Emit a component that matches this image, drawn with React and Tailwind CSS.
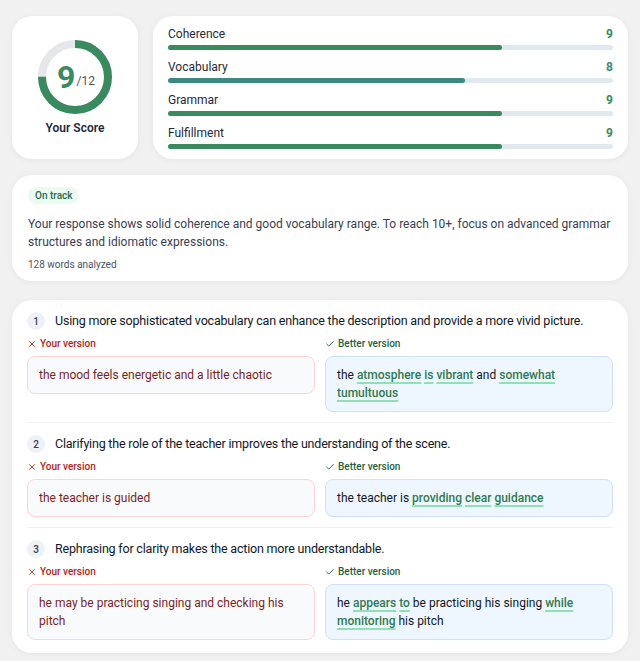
import { X, Check } from "lucide-react";

const SCORES = [
  { label: "Coherence", value: 9, color: "bg-[#3a8a5f]", text: "text-[#3a8a5f]" },
  { label: "Vocabulary", value: 8, color: "bg-[#3b8a7d]", text: "text-[#3b8a7d]" },
  { label: "Grammar", value: 9, color: "bg-[#3a8a5f]", text: "text-[#3a8a5f]" },
  { label: "Fulfillment", value: 9, color: "bg-[#3a8a5f]", text: "text-[#3a8a5f]" },
];

// better-version text is split into plain and highlighted chunks
const SUGGESTIONS = [
  {
    note: "Using more sophisticated vocabulary can enhance the description and provide a more vivid picture.",
    yours: "the mood feels energetic and a little chaotic",
    better: [
      ["the "],
      ["atmosphere", true],
      [" "],
      ["is", true],
      [" "],
      ["vibrant", true],
      [" and "],
      ["somewhat", true],
      [" "],
      ["tumultuous", true],
    ],
  },
  {
    note: "Clarifying the role of the teacher improves the understanding of the scene.",
    yours: "the teacher is guided",
    better: [
      ["the teacher is "],
      ["providing", true],
      [" "],
      ["clear", true],
      [" "],
      ["guidance", true],
    ],
  },
  {
    note: "Rephrasing for clarity makes the action more understandable.",
    yours: "he may be practicing singing and checking his pitch",
    better: [
      ["he "],
      ["appears", true],
      [" "],
      ["to", true],
      [" be practicing his singing "],
      ["while", true],
      [" "],
      ["monitoring", true],
      [" his pitch"],
    ],
  },
];

function ScoreRing({ score, max }) {
  const r = 33;
  const c = 2 * Math.PI * r;
  const filled = (score / max) * c;
  return (
    <div className="relative h-[74px] w-[74px]">
      <svg width="74" height="74" viewBox="0 0 74 74" className="-rotate-90">
        <circle cx="37" cy="37" r={r} fill="none" stroke="#e5e7eb" strokeWidth="8" />
        <circle
          cx="37"
          cy="37"
          r={r}
          fill="none"
          stroke="#3a8a5f"
          strokeWidth="8"
          strokeDasharray={`${filled} ${c}`}
        />
      </svg>
      <div className="absolute inset-0 flex items-center justify-center pl-[2px]">
        <span className="text-[32px] font-bold leading-none text-[#3a8a5f]">{score}</span>
        <span className="mt-[8px] ml-[1px] text-[12px] text-[#4b5563]">/{max}</span>
      </div>
    </div>
  );
}

function Suggestion({ item, index, last }) {
  return (
    <div className={`pt-3 ${last ? "pb-[13px]" : "pb-[10px] border-b border-[#eef0f3]"}`}>
      <div className="flex items-center gap-[10px]">
        <span className="flex h-[18px] w-[18px] shrink-0 items-center justify-center rounded-full bg-[#eef1f6] text-[10px] font-medium text-[#374151]">
          {index + 1}
        </span>
        <p className="text-[12.5px] leading-[18px] tracking-[-0.2px] text-[#111827]">{item.note}</p>
      </div>
      <div className="mt-[7px] grid grid-cols-2 gap-[10px]">
        <div>
          <div className="flex items-center gap-[3px] text-[10px] font-medium leading-[14px] text-[#b42318]">
            <X size={10} strokeWidth={2} />
            Your version
          </div>
          <div className="mt-[5px] rounded-lg border border-[#fbd5d5] bg-[#f8fafc] px-[11px] py-[9px] text-[12px] leading-[18px] text-[#7a1f1f]">
            {item.yours}
          </div>
        </div>
        <div>
          <div className="flex items-center gap-[3px] text-[10px] font-medium leading-[14px] text-[#1f5f3c]">
            <Check size={10} strokeWidth={2.2} />
            Better version
          </div>
          <div className="mt-[5px] rounded-lg border border-[#cfe2fb] bg-[#eef6ff] px-[11px] py-[9px] text-[12px] leading-[18px] text-[#111827]">
            {item.better.map(([t, hl], i) =>
              hl ? (
                <span
                  key={i}
                  className="font-medium text-[#2f7a4f] underline decoration-[#8fe0b4] decoration-2 underline-offset-[3px]"
                >
                  {t}
                </span>
              ) : (
                <span key={i}>{t}</span>
              )
            )}
          </div>
        </div>
      </div>
    </div>
  );
}

export default function App() {
  return (
    <div
      className="min-h-screen bg-[#f1f1f1] px-3 pt-4 pb-2"
      style={{ fontFamily: "Roboto, 'Noto Sans', sans-serif" }}
    >
      <div className="flex gap-[15px]">
        <div className="flex h-[143px] w-[126px] shrink-0 flex-col items-center rounded-[20px] bg-white pt-6 shadow-[0_1px_6px_rgba(0,0,0,0.05)]">
          <ScoreRing score={9} max={12} />
          <div className="mt-[5px] text-[12px] font-semibold text-[#1f2937]">Your Score</div>
        </div>
        <div className="flex h-[143px] flex-1 flex-col gap-[10px] rounded-[20px] bg-white px-[15px] pt-[11px] shadow-[0_1px_6px_rgba(0,0,0,0.05)]">
          {SCORES.map((s) => (
            <div key={s.label}>
              <div className="flex items-center justify-between text-[12px] leading-[14px]">
                <span className="text-[#1f2937]">{s.label}</span>
                <span className={`font-bold ${s.text}`}>{s.value}</span>
              </div>
              <div className="mt-[4px] h-[5px] rounded-full bg-[#e2e8f0]">
                <div
                  className={`h-full rounded-full ${s.color}`}
                  style={{ width: `${(s.value / 12) * 100}%` }}
                />
              </div>
            </div>
          ))}
        </div>
      </div>

      <div className="mt-4 rounded-[20px] bg-white px-4 pt-3 pb-[9px] shadow-[0_1px_6px_rgba(0,0,0,0.05)]">
        <div className="flex">
          <span className="rounded-full bg-[#ebfbf2] px-[7px] py-[3px] text-[10px] font-medium leading-[11px] text-[#2b6a47]">
            On track
          </span>
        </div>
        <p className="mt-[11px] text-[12px] leading-[18px] text-[#374151]">
          Your response shows solid coherence and good vocabulary range. To reach 10+, focus on advanced grammar
          structures and idiomatic expressions.
        </p>
        <p className="mt-[7px] text-[10px] leading-[14px] text-[#4b5563]">128 words analyzed</p>
      </div>

      <div className="mt-[19px] rounded-[20px] bg-white px-[15px] shadow-[0_1px_6px_rgba(0,0,0,0.05)]">
        {SUGGESTIONS.map((item, i) => (
          <Suggestion key={i} item={item} index={i} last={i === SUGGESTIONS.length - 1} />
        ))}
      </div>
    </div>
  );
}
